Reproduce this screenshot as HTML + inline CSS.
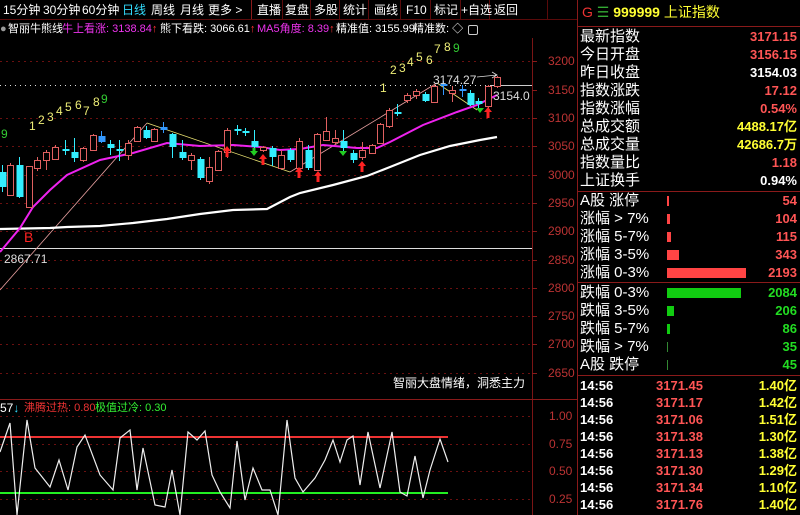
<!DOCTYPE html>
<html><head><meta charset="utf-8"><style>
*{margin:0;padding:0}
body{width:800px;height:515px;background:#000;overflow:hidden;position:relative;font-family:"Liberation Sans","Noto Sans CJK SC",sans-serif;color:#fff}
.t{position:absolute;white-space:nowrap;font-size:11px;line-height:14px}
.a{font-size:12px}
.rp{position:absolute;left:580px;width:217px;font-size:15px;line-height:18px;height:18px}
.rp .v{position:absolute;right:0;top:0;font-family:"Liberation Sans",sans-serif;font-weight:bold;font-size:13px}
.r{color:#ff5555}.y{color:#ffff33}.g{color:#22dd22}.w{color:#fff}
.bar{position:absolute;left:87px;top:4px;height:10px}
.tm{position:absolute;left:580px;width:217px;font-size:13px;font-weight:bold;line-height:17px}
</style></head><body>
<svg width="800" height="515" style="position:absolute;left:0;top:0">
<line x1="0" y1="19.5" x2="578" y2="19.5" stroke="#5a0a0a"/>
<line x1="532.5" y1="38" x2="532.5" y2="515" stroke="#7a1515"/>
<line x1="577.5" y1="0" x2="577.5" y2="515" stroke="#8a1a1a"/>
<line x1="251.5" y1="0" x2="251.5" y2="19" stroke="#8a1a1a"/>
<g stroke="#5a0a0a"><line x1="282.5" y1="0" x2="282.5" y2="19"/><line x1="310.5" y1="0" x2="310.5" y2="19"/><line x1="339.5" y1="0" x2="339.5" y2="19"/><line x1="368.5" y1="0" x2="368.5" y2="19"/><line x1="400.5" y1="0" x2="400.5" y2="19"/><line x1="430.5" y1="0" x2="430.5" y2="19"/><line x1="460.5" y1="0" x2="460.5" y2="19"/><line x1="489.5" y1="0" x2="489.5" y2="19"/><line x1="547.5" y1="0" x2="547.5" y2="19"/></g>
<line x1="0" y1="399.5" x2="578" y2="399.5" stroke="#8a1a1a"/>
<line x1="578" y1="26.5" x2="800" y2="26.5" stroke="#8a1a1a"/>
<line x1="578" y1="191.5" x2="800" y2="191.5" stroke="#8a1a1a"/>
<line x1="578" y1="282.5" x2="800" y2="282.5" stroke="#8a1a1a"/>
<line x1="578" y1="375.5" x2="800" y2="375.5" stroke="#8a1a1a"/>
<g stroke="#6a1010" stroke-dasharray="2,4">
<line x1="0" y1="61.5" x2="532" y2="61.5"/><line x1="0" y1="118.5" x2="532" y2="118.5"/><line x1="0" y1="146.5" x2="532" y2="146.5"/><line x1="0" y1="175.5" x2="532" y2="175.5"/><line x1="0" y1="203.5" x2="532" y2="203.5"/><line x1="0" y1="231.5" x2="532" y2="231.5"/><line x1="0" y1="260.5" x2="532" y2="260.5"/><line x1="0" y1="288.5" x2="532" y2="288.5"/><line x1="0" y1="316.5" x2="532" y2="316.5"/><line x1="0" y1="344.5" x2="532" y2="344.5"/><line x1="0" y1="373.5" x2="532" y2="373.5"/>
<line x1="0" y1="416.5" x2="532" y2="416.5"/><line x1="0" y1="444.5" x2="532" y2="444.5"/><line x1="0" y1="471.5" x2="532" y2="471.5"/><line x1="0" y1="499.5" x2="532" y2="499.5"/>
</g>
<g stroke="#8a1a1a"><line x1="532" y1="61.5" x2="537" y2="61.5"/><line x1="532" y1="90.5" x2="537" y2="90.5"/><line x1="532" y1="118.5" x2="537" y2="118.5"/><line x1="532" y1="146.5" x2="537" y2="146.5"/><line x1="532" y1="175.5" x2="537" y2="175.5"/><line x1="532" y1="203.5" x2="537" y2="203.5"/><line x1="532" y1="231.5" x2="537" y2="231.5"/><line x1="532" y1="260.5" x2="537" y2="260.5"/><line x1="532" y1="288.5" x2="537" y2="288.5"/><line x1="532" y1="316.5" x2="537" y2="316.5"/><line x1="532" y1="344.5" x2="537" y2="344.5"/><line x1="532" y1="373.5" x2="537" y2="373.5"/></g>
<line x1="0" y1="85.5" x2="490" y2="85.5" stroke="#ddd" stroke-dasharray="1,4"/>
<line x1="490" y1="85.5" x2="532" y2="85.5" stroke="#ccc"/>
<line x1="0" y1="248.5" x2="532" y2="248.5" stroke="#ddd"/>
<polyline points="0,290 147,123" stroke="#e8a0a0" fill="none" stroke-width="0.8"/>
<polyline points="147,123 290,172" stroke="#e8e070" fill="none" stroke-width="0.8"/>
<polyline points="290,172 437,83" stroke="#e8a0a0" fill="none" stroke-width="0.8"/>
<polyline points="437,83 477,110" stroke="#e8e070" fill="none" stroke-width="0.8"/>
<path d="M477,77 L497,75 M492,72 L497,75 L492,78" stroke="#ddd" fill="none" stroke-width="0.8"/>
<polyline points="0,229 50,228 67,227 100,226 133,223 167,219 200,214 233,210 267,209 290,197 300,193 333,185 367,176 390,167 420,155 450,146 480,140 497,137" stroke="#fff" fill="none" stroke-width="2.2"/>
<polyline points="0,252 20,228 33,207 50,190 67,175 100,160 133,153 167,143 200,146 233,145 260,147 280,150 300,149 323,145 357,148 377,148 390,142 423,125 457,112 477,105 497,95" stroke="#ee22ee" fill="none" stroke-width="2"/>
<g id="c"></g>
<g fill="#ff2222"><path d="M227,146 l-4,5 h2.5 v6 h3 v-6 h2.5z"/><path d="M263,154 l-4,5 h2.5 v6 h3 v-6 h2.5z"/><path d="M299,167 l-4,5 h2.5 v6 h3 v-6 h2.5z"/><path d="M318,171 l-4,5 h2.5 v6 h3 v-6 h2.5z"/><path d="M362,161 l-4,5 h2.5 v6 h3 v-6 h2.5z"/><path d="M488,107 l-4,5 h2.5 v6 h3 v-6 h2.5z"/></g>
<g fill="#22cc22"><path d="M254,156 l-4,-5 h8z M252.5,148 h3 v4 h-3z"/><path d="M343,156 l-4,-5 h8z"/><path d="M480,113 l-4,-5 h8z"/></g>
<line x1="0" y1="437" x2="448" y2="437" stroke="#ee3333" stroke-width="2"/>
<line x1="0" y1="493" x2="448" y2="493" stroke="#22ee22" stroke-width="2"/>
<polyline points="0,452 10,423 17,515 27,420 35,468 50,487 59,460 68,490 77,447 85,435 100,475 113,490 120,438 130,430 137,490 143,448 155,505 165,507 172,470 180,515 188,432 197,440 205,431 212,475 220,492 230,508 237,441 245,500 253,468 262,490 270,490 278,515 287,420 295,478 303,492 315,478 325,460 333,440 340,462 347,440 353,436 360,485 368,432 380,488 392,432 400,492 407,496 415,456 423,498 430,470 440,439 448,462" stroke="#eee" fill="none" stroke-width="1.2"/>
</svg>
<script>
var d=[[2,172,187,'c',165,192],[10,165,195,'r',163,196],[19,165,197,'c',157,198],[29,166,207,'r',166,207],[37,160,168,'r',157,171],[46,152,160,'r',150,170],[55,147,159,'r',145,160],[65,149,151,'c',140,155],[74,152,158,'c',138,162],[83,148,160,'r',147,162],[93,135,150,'r',134,151],[101,136,142,'b',131,143],[110,144,148,'c',140,155],[119,149,151,'c',140,161],[128,143,155,'r',140,160],[137,127,141,'r',126,142],[146,130,138,'c',126,139],[154,129,141,'r',128,142],[163,127,130,'b',122,133],[172,134,147,'c',133,158],[182,152,158,'c',140,160],[191,155,160,'r',153,170],[200,159,178,'c',157,180],[209,167,181,'r',157,184],[218,151,170,'r',150,171],[227,130,152,'r',128,158],[237,129,131,'c',125,135],[245,131,133,'c',128,136],[254,141,147,'c',130,153],[263,147,150,'r',146,152],[272,148,157,'c',146,166],[281,155,168,'r',150,170],[290,150,160,'c',148,162],[299,141,168,'r',138,170],[308,150,168,'c',145,170],[317,134,170,'r',133,171],[326,131,140,'r',117,140],[335,138,142,'r',130,145],[343,141,148,'c',130,152],[353,153,160,'c',150,163],[362,150,157,'r',142,160],[372,145,153,'r',144,154],[380,124,143,'r',123,144],[389,110,126,'r',108,128],[397,112,114,'c',104,116],[407,95,100,'r',93,103],[416,91,95,'r',89,99],[425,94,101,'c',92,102],[434,86,102,'r',84,102],[443,84,86,'b',81,95],[452,90,93,'r',86,102],[462,89,90,'b',85,97],[470,93,105,'c',90,106],[478,101,104,'c',98,108],[488,86,106,'r',85,108],[497,77,86,'r',76,88]];
var s='';d.forEach(function(a){var col=a[3]=='r'?'#e06060':(a[3]=='b'?'#3399ff':'#33eeff');
s+='<line x1="'+(a[0]+.5)+'" y1="'+a[4]+'" x2="'+(a[0]+.5)+'" y2="'+a[5]+'" stroke="'+col+'"/>';
if(a[3]=='r')s+='<rect x="'+(a[0]-2.5)+'" y="'+(a[1]+.5)+'" width="6" height="'+Math.max(1,a[2]-a[1])+'" fill="#000" stroke="'+col+'"/>';
else s+='<rect x="'+(a[0]-2.5)+'" y="'+a[1]+'" width="7" height="'+Math.max(2,a[2]-a[1])+'" fill="'+col+'"/>';});
document.getElementById('c').innerHTML=s;
</script>
<div class="t a" style="left:3px;top:3px">15分钟</div>
<div class="t a" style="left:43px;top:3px">30分钟</div>
<div class="t a" style="left:82px;top:3px">60分钟</div>
<div class="t a" style="left:122px;top:3px;color:#33ddff">日线</div>
<div class="t a" style="left:151px;top:3px">周线</div>
<div class="t a" style="left:180px;top:3px">月线</div>
<div class="t a" style="left:208px;top:3px">更多 &gt;</div>
<div class="t a" style="left:257px;top:3px">直播</div>
<div class="t a" style="left:285px;top:3px">复盘</div>
<div class="t a" style="left:314px;top:3px">多股</div>
<div class="t a" style="left:343px;top:3px">统计</div>
<div class="t a" style="left:374px;top:3px">画线</div>
<div class="t a" style="left:406px;top:3px">F10</div>
<div class="t a" style="left:434px;top:3px">标记</div>
<div class="t a" style="left:461px;top:3px">+自选</div>
<div class="t a" style="left:494px;top:3px">返回</div>
<div class="t" style="left:0;top:22px;color:#999">●</div>
<div class="t" style="left:8px;top:22px">智丽牛熊线</div>
<div class="t" style="left:62px;top:22px;color:#ee33ee">牛上看涨: 3138.84<span style="color:#ff3333">↑</span></div>
<div class="t" style="left:160px;top:22px">熊下看跌: 3066.61<span style="color:#ff3333">↑</span></div>
<div class="t" style="left:257px;top:22px;color:#ee33ee">MA5角度: 8.39<span style="color:#ff3333">↑</span></div>
<div class="t" style="left:336px;top:22px">精准值: 3155.99</div>
<div class="t" style="left:413px;top:22px">精准数: ◇</div>
<div style="position:absolute;left:468px;top:25px;width:8px;height:8px;border:1px solid #ccc;border-radius:2px"></div>
<div class="t a" style="left:1px;top:127px;color:#33cc33">9</div>
<div class="t a" style="left:29px;top:119px;color:#eeee77">1</div>
<div class="t a" style="left:38px;top:113px;color:#eeee77">2</div>
<div class="t a" style="left:47px;top:110px;color:#eeee77">3</div>
<div class="t a" style="left:56px;top:104px;color:#eeee77">4</div>
<div class="t a" style="left:65px;top:100px;color:#eeee77">5</div>
<div class="t a" style="left:75px;top:98px;color:#eeee77">6</div>
<div class="t a" style="left:83px;top:104px;color:#eeee77">7</div>
<div class="t a" style="left:93px;top:95px;color:#eeee77">8</div>
<div class="t a" style="left:101px;top:92px;color:#33cc33">9</div>
<div class="t a" style="left:380px;top:81px;color:#eeee77">1</div>
<div class="t a" style="left:390px;top:63px;color:#eeee77">2</div>
<div class="t a" style="left:399px;top:61px;color:#eeee77">3</div>
<div class="t a" style="left:407px;top:55px;color:#eeee77">4</div>
<div class="t a" style="left:416px;top:50px;color:#eeee77">5</div>
<div class="t a" style="left:426px;top:53px;color:#eeee77">6</div>
<div class="t a" style="left:434px;top:42px;color:#eeee77">7</div>
<div class="t a" style="left:444px;top:40px;color:#eeee77">8</div>
<div class="t a" style="left:453px;top:41px;color:#33cc33">9</div>
<div class="t a" style="left:433px;top:73px;color:#ddd">3174.27</div>
<div class="t a" style="left:493px;top:89px;color:#ddd">3154.0</div>
<div class="t a" style="left:4px;top:252px;color:#ddd">2867.71</div>
<div class="t" style="left:24px;top:230px;color:#ff2222;font-size:14px">B</div>
<div class="t a" style="left:393px;top:376px">智丽大盘情绪，洞悉主力</div>
<div class="t a" style="left:548px;top:54px;color:#bb3333">3200</div>
<div class="t a" style="left:548px;top:83px;color:#bb3333">3150</div>
<div class="t a" style="left:548px;top:111px;color:#bb3333">3100</div>
<div class="t a" style="left:548px;top:139px;color:#bb3333">3050</div>
<div class="t a" style="left:548px;top:168px;color:#bb3333">3000</div>
<div class="t a" style="left:548px;top:196px;color:#bb3333">2950</div>
<div class="t a" style="left:548px;top:224px;color:#bb3333">2900</div>
<div class="t a" style="left:548px;top:253px;color:#bb3333">2850</div>
<div class="t a" style="left:548px;top:281px;color:#bb3333">2800</div>
<div class="t a" style="left:548px;top:309px;color:#bb3333">2750</div>
<div class="t a" style="left:548px;top:337px;color:#bb3333">2700</div>
<div class="t a" style="left:548px;top:366px;color:#bb3333">2650</div>
<div class="t a" style="left:549px;top:409px;color:#bb3333">1.00</div>
<div class="t a" style="left:549px;top:437px;color:#bb3333">0.75</div>
<div class="t a" style="left:549px;top:464px;color:#bb3333">0.50</div>
<div class="t a" style="left:549px;top:492px;color:#bb3333">0.25</div>
<div class="t a" style="left:0;top:401px">57<span style="color:#33ddff">↓</span></div>
<div class="t" style="left:24px;top:401px;color:#ee3333">沸腾过热: 0.80</div>
<div class="t" style="left:95px;top:401px;color:#33ee33">极值过冷: 0.30</div>
<div class="t" style="left:582px;top:4px;font-size:14px;line-height:16px"><span style="color:#ee3333">G</span> <span style="color:#33aa33">☰</span> <span class="y" style="font-weight:bold">999999</span> <span class="y">上证指数</span></div>
<div class="rp" style="top:28px">最新指数<span class="v r">3171.15</span></div>
<div class="rp" style="top:46px">今日开盘<span class="v r">3156.15</span></div>
<div class="rp" style="top:64px">昨日收盘<span class="v w">3154.03</span></div>
<div class="rp" style="top:82px">指数涨跌<span class="v r">17.12</span></div>
<div class="rp" style="top:100px">指数涨幅<span class="v r">0.54%</span></div>
<div class="rp" style="top:118px">总成交额<span class="v y">4488.17亿</span></div>
<div class="rp" style="top:136px">总成交量<span class="v y">42686.7万</span></div>
<div class="rp" style="top:154px">指数量比<span class="v r">1.18</span></div>
<div class="rp" style="top:172px">上证换手<span class="v w">0.94%</span></div>
<div class="rp" style="top:192px">A股 涨停<div class="bar" style="width:2px;background:#ff4444"></div><span class="v r">54</span></div>
<div class="rp" style="top:210px">涨幅 &gt; 7%<div class="bar" style="width:3px;background:#ff4444"></div><span class="v r">104</span></div>
<div class="rp" style="top:228px">涨幅 5-7%<div class="bar" style="width:4px;background:#ff4444"></div><span class="v r">115</span></div>
<div class="rp" style="top:246px">涨幅 3-5%<div class="bar" style="width:12px;background:#ff4444"></div><span class="v r">343</span></div>
<div class="rp" style="top:264px">涨幅 0-3%<div class="bar" style="width:79px;background:#ff4444"></div><span class="v r">2193</span></div>
<div class="rp" style="top:284px">跌幅 0-3%<div class="bar" style="width:74px;background:#11cc11"></div><span class="v g">2084</span></div>
<div class="rp" style="top:302px">跌幅 3-5%<div class="bar" style="width:7px;background:#11cc11"></div><span class="v g">206</span></div>
<div class="rp" style="top:320px">跌幅 5-7%<div class="bar" style="width:3px;background:#11cc11"></div><span class="v g">86</span></div>
<div class="rp" style="top:338px">跌幅 &gt; 7%<div class="bar" style="width:1px;background:#338833"></div><span class="v g">35</span></div>
<div class="rp" style="top:356px">A股 跌停<div class="bar" style="width:1px;background:#338833"></div><span class="v g">45</span></div>
<div class="tm" style="top:377px">14:56<span class="r" style="position:absolute;left:76px">3171.45</span><span class="y" style="position:absolute;right:0">1.40亿</span></div>
<div class="tm" style="top:394px">14:56<span class="r" style="position:absolute;left:76px">3171.17</span><span class="y" style="position:absolute;right:0">1.42亿</span></div>
<div class="tm" style="top:411px">14:56<span class="r" style="position:absolute;left:76px">3171.06</span><span class="y" style="position:absolute;right:0">1.51亿</span></div>
<div class="tm" style="top:428px">14:56<span class="r" style="position:absolute;left:76px">3171.38</span><span class="y" style="position:absolute;right:0">1.30亿</span></div>
<div class="tm" style="top:445px">14:56<span class="r" style="position:absolute;left:76px">3171.13</span><span class="y" style="position:absolute;right:0">1.38亿</span></div>
<div class="tm" style="top:462px">14:56<span class="r" style="position:absolute;left:76px">3171.30</span><span class="y" style="position:absolute;right:0">1.29亿</span></div>
<div class="tm" style="top:479px">14:56<span class="r" style="position:absolute;left:76px">3171.34</span><span class="y" style="position:absolute;right:0">1.10亿</span></div>
<div class="tm" style="top:496px">14:56<span class="r" style="position:absolute;left:76px">3171.76</span><span class="y" style="position:absolute;right:0">1.40亿</span></div>
</body></html>
